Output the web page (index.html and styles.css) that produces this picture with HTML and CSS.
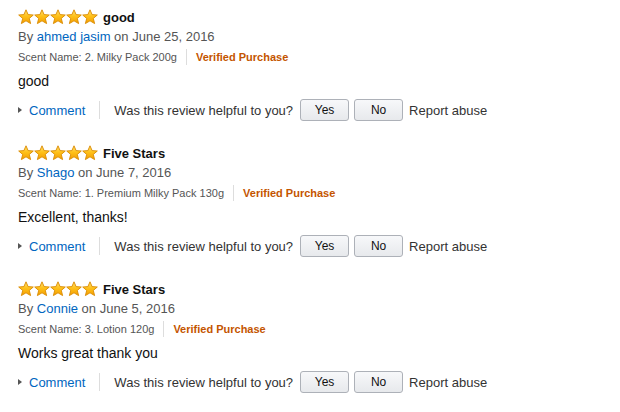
FILE: index.html
```html
<!DOCTYPE html>
<html lang="en">
<head>
  <meta charset="UTF-8" />
  <title>Reviews</title>
  <link rel="stylesheet" href="styles.css">
</head>
<body>
  <svg width="0" height="0" class="defs">
    <defs>
      <linearGradient id="starFill" x1="0" y1="0" x2="0" y2="1">
        <stop offset="0" stop-color="#ffe17a"/>
        <stop offset="0.45" stop-color="#ffc21a"/>
        <stop offset="1" stop-color="#f39c00"/>
      </linearGradient>
      <symbol id="star" viewBox="0 0 16 16">
        <path d="M8 0.8 L10.1 5.6 L15.3 6 L11.3 9.4 L12.6 14.6 L8 11.8 L3.4 14.6 L4.7 9.4 L0.7 6 L5.9 5.6 Z" fill="url(#starFill)" stroke="#d98a00" stroke-width="0.9" stroke-linejoin="round"/>
      </symbol>
    </defs>
  </svg>

  <div class="reviews">
    <div class="review">
      <div class="review-title">
        <span class="stars"><svg><use href="#star"/></svg><svg><use href="#star"/></svg><svg><use href="#star"/></svg><svg><use href="#star"/></svg><svg><use href="#star"/></svg></span>
        <span class="title-text">good</span>
      </div>
      <div class="byline">By <a href="#">ahmed jasim</a> on June 25, 2016</div>
      <div class="meta"><span>Scent Name: 2. Milky Pack 200g</span><span class="sep"></span><span class="verified">Verified Purchase</span></div>
      <div class="body">good</div>
      <div class="actions">
        <span class="caret"></span><a href="#">Comment</a><span class="sep tall"></span>
        <span class="helpful">Was this review helpful to you?</span>
        <button>Yes</button><button>No</button>
        <span class="report">Report abuse</span>
      </div>
    </div>

    <div class="review">
      <div class="review-title">
        <span class="stars"><svg><use href="#star"/></svg><svg><use href="#star"/></svg><svg><use href="#star"/></svg><svg><use href="#star"/></svg><svg><use href="#star"/></svg></span>
        <span class="title-text">Five Stars</span>
      </div>
      <div class="byline">By <a href="#">Shago</a> on June 7, 2016</div>
      <div class="meta"><span>Scent Name: 1. Premium Milky Pack 130g</span><span class="sep"></span><span class="verified">Verified Purchase</span></div>
      <div class="body">Excellent, thanks!</div>
      <div class="actions">
        <span class="caret"></span><a href="#">Comment</a><span class="sep tall"></span>
        <span class="helpful">Was this review helpful to you?</span>
        <button>Yes</button><button>No</button>
        <span class="report">Report abuse</span>
      </div>
    </div>

    <div class="review">
      <div class="review-title">
        <span class="stars"><svg><use href="#star"/></svg><svg><use href="#star"/></svg><svg><use href="#star"/></svg><svg><use href="#star"/></svg><svg><use href="#star"/></svg></span>
        <span class="title-text">Five Stars</span>
      </div>
      <div class="byline">By <a href="#">Connie</a> on June 5, 2016</div>
      <div class="meta"><span>Scent Name: 3. Lotion 120g</span><span class="sep"></span><span class="verified">Verified Purchase</span></div>
      <div class="body">Works great thank you</div>
      <div class="actions">
        <span class="caret"></span><a href="#">Comment</a><span class="sep tall"></span>
        <span class="helpful">Was this review helpful to you?</span>
        <button>Yes</button><button>No</button>
        <span class="report">Report abuse</span>
      </div>
    </div>
  </div>
</body>
</html>
```
FILE: styles.css
```css
body {
  margin: 0;
  background: #fff;
  color: #111;
  font-family: "Liberation Sans", Arial, sans-serif;
  font-size: 13px;
}
.defs { position: absolute; }
a { color: #0066c0; text-decoration: none; }

.reviews { padding: 7px 0 0 18px; }
.review { margin-bottom: 22px; }

.review-title {
  display: flex;
  align-items: center;
  height: 20px;
}
.stars { display: flex; margin-right: 5px; }
.stars svg { width: 16px; height: 16px; }
.title-text { font-weight: bold; font-size: 13px; }

.byline {
  height: 20px;
  line-height: 20px;
  font-size: 13px;
  color: #555;
}
.meta {
  display: flex;
  align-items: center;
  height: 20px;
  font-size: 11px;
  color: #555;
}
.sep {
  display: inline-block;
  width: 1px;
  height: 16px;
  background: #ddd;
  margin: 0 9px;
}
.verified { color: #c45500; font-weight: bold; }

.body {
  margin-top: 4px;
  height: 20px;
  line-height: 20px;
  font-size: 14px;
  color: #111;
}

.actions {
  display: flex;
  align-items: center;
  margin-top: 8px;
  height: 22px;
  font-size: 13px;
}
.caret {
  width: 0;
  height: 0;
  border-top: 3px solid transparent;
  border-bottom: 3px solid transparent;
  border-left: 4px solid #555;
  margin-right: 7px;
}
.sep.tall { height: 18px; margin: 0 14px 0 14px; }
.helpful { color: #333; margin-right: 7px; }
.actions button {
  width: 49px;
  height: 22px;
  margin-right: 5px;
  padding: 0;
  font-family: inherit;
  font-size: 12px;
  color: #111;
  background: linear-gradient(#f7f8fa, #e7e9ec);
  border: 1px solid #adb1b8;
  border-radius: 3px;
}
.actions button + button { margin-right: 6px; }
.report { color: #333; }
```
